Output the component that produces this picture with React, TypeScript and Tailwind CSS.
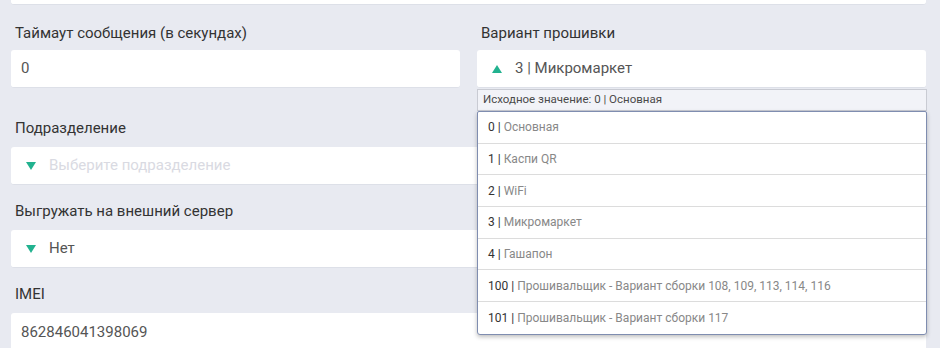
import React from "react";

const Tri = ({ up }: { up?: boolean }) => (
  <svg width="10" height="8" viewBox="0 0 10 8" className="shrink-0">
    {up ? <polygon points="5,0 10,8 0,8" fill="#22b28f" /> : <polygon points="0,0 10,0 5,8" fill="#22b28f" />}
  </svg>
);

const options: [string, string][] = [
  ["0", "Основная"],
  ["1", "Каспи QR"],
  ["2", "WiFi"],
  ["3", "Микромаркет"],
  ["4", "Гашапон"],
  ["100", "Прошивальщик - Вариант сборки 108, 109, 113, 114, 116"],
  ["101", "Прошивальщик - Вариант сборки 117"],
];

export default function App() {
  return (
    <div
      className="w-[940px] h-[348px] overflow-hidden bg-[#e8eaf1] pl-[11px] pr-[14px]"
      style={{ fontFamily: "Roboto, 'Liberation Sans', sans-serif" }}
    >
      <div className="h-[5px] bg-white rounded-b-[3px] border-b border-[#dde0e8]" />
      <div className="grid grid-cols-2 gap-x-[17px] mt-[19px]">
        <div>
          <div className="h-[18px] leading-[18px] text-[15px] text-[#333] pl-[4px]">Таймаут сообщения (в секундах)</div>
          <div className="mt-[8px] h-[38px] bg-white rounded-[3px] border-b border-[#dde0e8] flex items-center pl-[10px] text-[15px] text-[#555]">0</div>
        </div>
        <div className="relative">
          <div className="h-[18px] leading-[18px] text-[15px] text-[#333] pl-[4px]">Вариант прошивки</div>
          <div className="mt-[8px] h-[38px] bg-white rounded-[3px] border-b border-[#dde0e8] flex items-center pl-[15px] gap-[13px] text-[15px] text-[#555]">
            <Tri up />
            <span>3 | Микромаркет</span>
          </div>
          <div className="absolute left-0 right-[-1px] top-[65px] z-10">
            <div className="h-[22px] bg-[#f2f3f8] border border-[#c9cbd3] flex items-center pl-[5px] text-[11.5px] text-[#4a4a4a]">
              Исходное значение: 0 | Основная
            </div>
            <div className="bg-white border border-[#7f8db0] rounded-b-[3px] rounded-t-[2px] shadow-[0_2px_4px_rgba(0,0,0,0.25)]">
              {options.map(([n, t], i) => (
                <div
                  key={n}
                  className={`h-[31.7px] flex items-center pl-[10px] text-[12px] ${i < options.length - 1 ? "border-b border-[#dcdcdc]" : ""}`}
                >
                  <span className="text-[#333]">{n} |</span>
                  <span className="text-[#888] ml-[3px]">{t}</span>
                </div>
              ))}
            </div>
          </div>
        </div>
      </div>
      <div className="mt-[31px]">
        <div className="h-[18px] leading-[18px] text-[15px] text-[#333] pl-[4px]">Подразделение</div>
        <div className="mt-[10px] h-[38px] bg-white rounded-[3px] border-b border-[#dde0e8] flex items-center pl-[15px] gap-[13px] text-[15px] text-[#d9dae2]">
          <Tri />
          <span>Выберите подразделение</span>
        </div>
      </div>
      <div className="mt-[17px]">
        <div className="h-[18px] leading-[18px] text-[15px] text-[#333] pl-[4px]">Выгружать на внешний сервер</div>
        <div className="mt-[10px] h-[38px] bg-white rounded-[3px] border-b border-[#dde0e8] flex items-center pl-[15px] gap-[13px] text-[15px] text-[#555]">
          <Tri />
          <span>Нет</span>
        </div>
      </div>
      <div className="mt-[17px]">
        <div className="h-[18px] leading-[18px] text-[15px] text-[#333] pl-[4px]">IMEI</div>
        <div className="mt-[10px] h-[38px] bg-white rounded-[3px] flex items-center pl-[10px] text-[15px] text-[#555]">862846041398069</div>
      </div>
    </div>
  );
}
